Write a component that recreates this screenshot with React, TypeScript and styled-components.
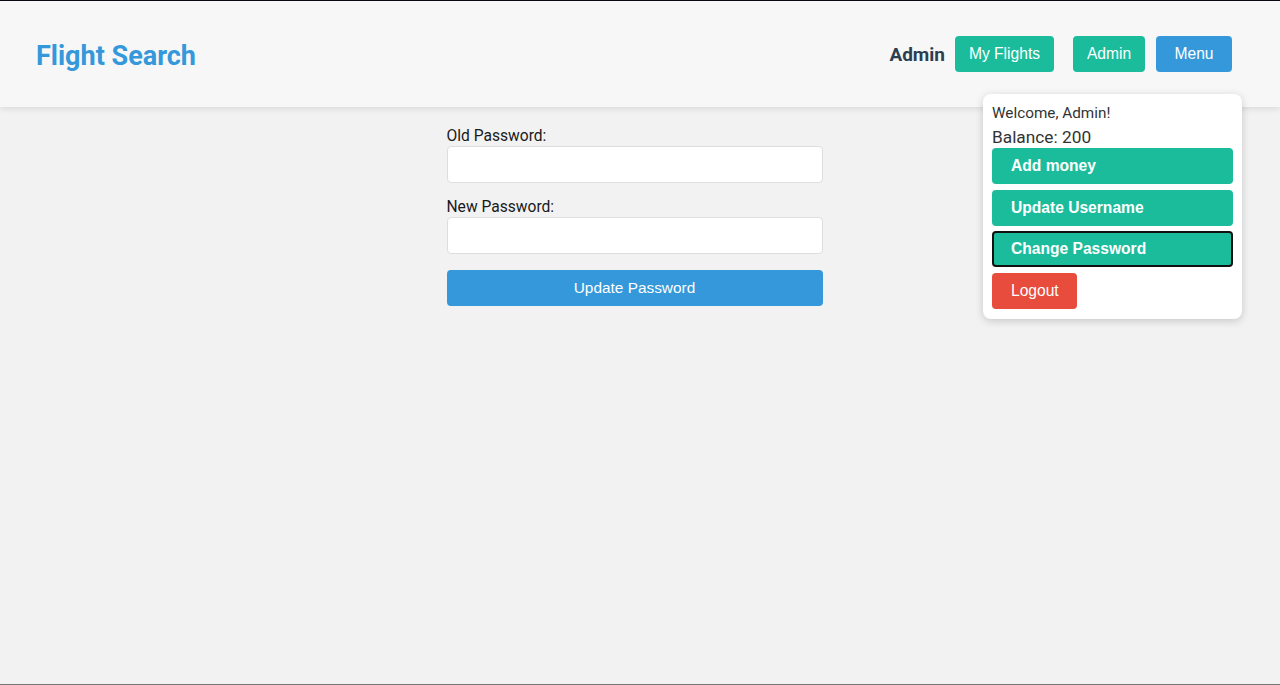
import React from "react";
import styled, { createGlobalStyle } from "styled-components";

const Global = createGlobalStyle`
  html, body { margin: 0; padding: 0; }
  body {
    background: #f2f2f2;
    font-family: Roboto, "Liberation Sans", Arial, sans-serif;
  }
  * { box-sizing: border-box; }
`;

const Page = styled.div`
  min-height: 685px;
  border-top: 1px solid #0a0a14;
  border-bottom: 1px solid #767676;
  background: #f2f2f2;
`;

const Header = styled.header`
  height: 106px;
  background: #f7f7f7;
  box-shadow: 0 2px 6px rgba(0, 0, 0, 0.1);
  display: flex;
  align-items: center;
  justify-content: space-between;
  padding: 0 48px 0 36px;
  position: relative;
  z-index: 1;
`;

const Title = styled.h1`
  margin: 0;
  padding-top: 3px;
  font-family: Roboto, sans-serif;
  font-weight: 700;
  font-size: 27px;
  color: #3498db;
`;

const Nav = styled.nav`
  display: flex;
  align-items: center;
`;

const UserName = styled.span`
  font-family: Roboto, sans-serif;
  font-weight: 700;
  font-size: 19px;
  color: #2c3e50;
  margin-right: 10px;
`;

const NavButton = styled.button<{ $color: string; $w: number; $gap?: number }>`
  height: 36px;
  width: ${(p) => p.$w}px;
  border: none;
  border-radius: 4px;
  background: ${(p) => p.$color};
  color: #fff;
  font-family: "Liberation Sans", Arial, sans-serif;
  font-size: 15.6px;
  padding: 0;
  margin-left: ${(p) => p.$gap ?? 0}px;
  cursor: pointer;
`;

const MenuWrap = styled.div`
  position: relative;
  margin-left: 11px;
`;

const Dropdown = styled.div`
  position: absolute;
  top: calc(100% + 22px);
  right: -10px;
  width: 259px;
  background: #fff;
  border-radius: 8px;
  box-shadow: 0 2px 8px rgba(0, 0, 0, 0.18);
  padding: 9px 9px 10px;
  display: flex;
  flex-direction: column;
  align-items: flex-start;
`;

const Welcome = styled.div`
  font-family: Roboto, sans-serif;
  font-size: 15.3px;
  color: #333;
  line-height: 20px;
`;

const Balance = styled.div`
  font-family: Roboto, sans-serif;
  font-size: 17.3px;
  color: #333;
  line-height: 22px;
  margin: 3px 0 0;
`;

const MenuItem = styled.button<{ $danger?: boolean; $focused?: boolean }>`
  width: ${(p) => (p.$danger ? "85px" : "100%")};
  height: 36px;
  margin-bottom: 5.5px;
  border: ${(p) => (p.$focused ? "2px solid #111" : "none")};
  border-radius: 4px;
  background: ${(p) => (p.$danger ? "#e74c3c" : "#1abc9c")};
  color: #fff;
  text-align: left;
  padding: 0;
  padding-left: ${(p) => (p.$focused ? 17 : 19)}px;
  font-family: "Liberation Sans", Arial, sans-serif;
  font-size: 15.6px;
  font-weight: ${(p) => (p.$danger ? 400 : 700)};
  cursor: pointer;
  &:last-child { margin-bottom: 0; }
`;

const Main = styled.main`
  display: flex;
  justify-content: center;
  padding: 19px 11px 0 0;
`;

const Form = styled.form`
  width: 376px;
  display: flex;
  flex-direction: column;
`;

const Label = styled.label`
  font-family: Roboto, sans-serif;
  font-size: 15.6px;
  color: #1a1a1a;
  line-height: 19px;
  padding-top: 1px;
`;

const Input = styled.input`
  height: 37px;
  margin: 0 0 14px;
  border: 1px solid #dedede;
  border-radius: 4px;
  background: #fff;
  padding: 0 10px;
  font-size: 16px;
  outline: none;
`;

const Submit = styled.button`
  height: 36px;
  margin-top: 2px;
  border: none;
  border-radius: 4px;
  background: #3498db;
  color: #fff;
  font-family: "Liberation Sans", Arial, sans-serif;
  font-size: 15.4px;
  cursor: pointer;
`;

export default function App() {
  return (
    <Page>
      <Global />
      <Header>
        <Title>Flight Search</Title>
        <Nav>
          <UserName>Admin</UserName>
          <NavButton $color="#1abc9c" $w={99}>My Flights</NavButton>
          <NavButton $color="#1abc9c" $w={72} $gap={19}>Admin</NavButton>
          <MenuWrap>
            <NavButton $color="#3498db" $w={76}>Menu</NavButton>
            <Dropdown>
              <Welcome>Welcome, Admin!</Welcome>
              <Balance>Balance: 200</Balance>
              <MenuItem>Add money</MenuItem>
              <MenuItem>Update Username</MenuItem>
              <MenuItem $focused>Change Password</MenuItem>
              <MenuItem $danger>Logout</MenuItem>
            </Dropdown>
          </MenuWrap>
        </Nav>
      </Header>
      <Main>
        <Form onSubmit={(e) => e.preventDefault()}>
          <Label>Old Password:</Label>
          <Input type="password" />
          <Label>New Password:</Label>
          <Input type="password" />
          <Submit type="submit">Update Password</Submit>
        </Form>
      </Main>
    </Page>
  );
}
